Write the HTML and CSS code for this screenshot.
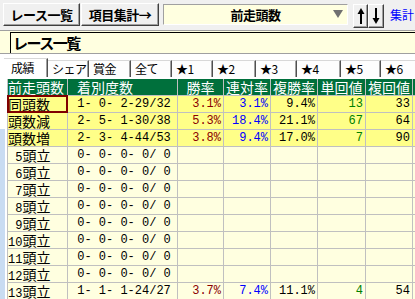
FILE: index.html
```html
<!DOCTYPE html>
<html lang="ja">
<head>
<meta charset="utf-8">
<title>レース一覧</title>
<link rel="stylesheet" href="styles.css">
</head>
<body>
<div class="app">
  <div class="toolbar">
    <button class="btn btn-list">レース一覧</button>
    <button class="btn btn-item">項目集計→</button>
    <div class="select">
      <span class="select-text">前走頭数</span>
      <span class="caret"></span>
    </div>
    <button class="btn btn-arrow btn-up" aria-label="上へ">
      <svg width="8" height="16" viewBox="0 0 8 16"><polygon points="4,0 7.5,6 0.5,6" fill="#000"/><rect x="3" y="5" width="2" height="11" fill="#000"/></svg>
    </button>
    <button class="btn btn-arrow btn-down" aria-label="下へ">
      <svg width="8" height="16" viewBox="0 0 8 16"><polygon points="4,16 7.5,10 0.5,10" fill="#000"/><rect x="3" y="0" width="2" height="11" fill="#000"/></svg>
    </button>
    <span class="link">集計</span>
  </div>

  <div class="titlebar"><div class="titlebox">レース一覧</div></div>

  <div class="tabs">
    <div class="tab active t-w44">成績</div>
    <div class="tab t-w41">シェア</div>
    <div class="tab t-w42">賞金</div>
    <div class="tab t-w41">全て</div>
    <div class="tab t-w41">★1</div>
    <div class="tab t-w43">★2</div>
    <div class="tab t-w41">★3</div>
    <div class="tab t-w44">★4</div>
    <div class="tab t-w40">★5</div>
    <div class="tab t-w42">★6</div>
  </div>

  <div class="tablewrap">
    <div class="strip"></div>
    <div class="grid">
      <div class="th th-left">前走頭数</div>
      <div class="th th-left2">着別度数</div>
      <div class="th">勝率</div>
      <div class="th">連対率</div>
      <div class="th">複勝率</div>
      <div class="th">単回値</div>
      <div class="th">複回値</div>
      <div class="th"></div>

      <div class="td lbl hl sel">同頭数</div>
      <div class="td cnt hl"> 1- 0- 2-29/32</div>
      <div class="td num hl red">3.1%</div>
      <div class="td num hl blue">3.1%</div>
      <div class="td num hl">9.4%</div>
      <div class="td num hl green">13</div>
      <div class="td num hl">33</div>
      <div class="td hl"></div>

      <div class="td lbl hl">頭数減</div>
      <div class="td cnt hl"> 2- 5- 1-30/38</div>
      <div class="td num hl red">5.3%</div>
      <div class="td num hl blue">18.4%</div>
      <div class="td num hl">21.1%</div>
      <div class="td num hl green">67</div>
      <div class="td num hl">64</div>
      <div class="td hl"></div>

      <div class="td lbl hl">頭数増</div>
      <div class="td cnt hl"> 2- 3- 4-44/53</div>
      <div class="td num hl red">3.8%</div>
      <div class="td num hl blue">9.4%</div>
      <div class="td num hl">17.0%</div>
      <div class="td num hl green">7</div>
      <div class="td num hl">90</div>
      <div class="td hl"></div>

      <div class="td lbl"><span class="d"> 5</span>頭立</div>
      <div class="td cnt"> 0- 0- 0- 0/ 0</div>
      <div class="td"></div><div class="td"></div><div class="td"></div><div class="td"></div><div class="td"></div><div class="td"></div>

      <div class="td lbl"><span class="d"> 6</span>頭立</div>
      <div class="td cnt"> 0- 0- 0- 0/ 0</div>
      <div class="td"></div><div class="td"></div><div class="td"></div><div class="td"></div><div class="td"></div><div class="td"></div>

      <div class="td lbl"><span class="d"> 7</span>頭立</div>
      <div class="td cnt"> 0- 0- 0- 0/ 0</div>
      <div class="td"></div><div class="td"></div><div class="td"></div><div class="td"></div><div class="td"></div><div class="td"></div>

      <div class="td lbl"><span class="d"> 8</span>頭立</div>
      <div class="td cnt"> 0- 0- 0- 0/ 0</div>
      <div class="td"></div><div class="td"></div><div class="td"></div><div class="td"></div><div class="td"></div><div class="td"></div>

      <div class="td lbl"><span class="d"> 9</span>頭立</div>
      <div class="td cnt"> 0- 0- 0- 0/ 0</div>
      <div class="td"></div><div class="td"></div><div class="td"></div><div class="td"></div><div class="td"></div><div class="td"></div>

      <div class="td lbl"><span class="d">10</span>頭立</div>
      <div class="td cnt"> 0- 0- 0- 0/ 0</div>
      <div class="td"></div><div class="td"></div><div class="td"></div><div class="td"></div><div class="td"></div><div class="td"></div>

      <div class="td lbl"><span class="d">11</span>頭立</div>
      <div class="td cnt"> 0- 0- 0- 0/ 0</div>
      <div class="td"></div><div class="td"></div><div class="td"></div><div class="td"></div><div class="td"></div><div class="td"></div>

      <div class="td lbl"><span class="d">12</span>頭立</div>
      <div class="td cnt"> 0- 0- 0- 0/ 0</div>
      <div class="td"></div><div class="td"></div><div class="td"></div><div class="td"></div><div class="td"></div><div class="td"></div>

      <div class="td lbl"><span class="d">13</span>頭立</div>
      <div class="td cnt"> 1- 1- 1-24/27</div>
      <div class="td num red">3.7%</div>
      <div class="td num blue">7.4%</div>
      <div class="td num">11.1%</div>
      <div class="td num green">4</div>
      <div class="td num">54</div>
      <div class="td"></div>
    </div>
  </div>
</div>
</body>
</html>
```

FILE: styles.css
```css
* {
  box-sizing: border-box;
  margin: 0;
  padding: 0;
}

html, body {
  width: 415px;
  height: 299px;
  overflow: hidden;
}

body {
  background: #f0f0f0;
  font-family: "Noto Sans CJK JP", sans-serif;
  color: #000;
}

.app {
  width: 415px;
  height: 299px;
  overflow: hidden;
}

/* ---------- toolbar ---------- */
.toolbar {
  display: flex;
  align-items: flex-start;
  height: 30px;
  padding: 3px 0 0 3px;
}

.btn {
  font-family: "Noto Sans CJK JP", sans-serif;
  font-weight: bold;
  font-size: 13px;
  line-height: 1;
  color: #000;
  background: #f0f0f0;
  border: 1px solid;
  border-color: #ffffff #404040 #404040 #ffffff;
  box-shadow: inset -1px -1px 0 #a0a0a0;
  height: 23px;
  display: flex;
  align-items: center;
  justify-content: center;
  padding: 0;
  letter-spacing: -0.5px;
}

.btn-list {
  width: 77px;
}

.btn-item {
  width: 78px;
  margin-left: 1px;
}

.select {
  position: relative;
  width: 185px;
  height: 21px;
  margin-left: 4px;
  margin-top: 1px;
  background: #ffffe0;
  border: 1px solid;
  border-color: #a0a0a0 #ffffff #ffffff #a0a0a0;
  display: flex;
  align-items: center;
  justify-content: center;
}

.select-text {
  font-weight: bold;
  font-size: 13px;
  line-height: 1;
  letter-spacing: -0.5px;
}

.caret {
  position: absolute;
  right: 4px;
  top: 5px;
  width: 0;
  height: 0;
  border-left: 5px solid transparent;
  border-right: 5px solid transparent;
  border-top: 8px solid #707070;
}

.btn-arrow {
  width: 15px;
  height: 24px;
  margin-top: 1px;
}

.btn-up {
  margin-left: 5px;
}

.btn-down {
  width: 16px;
}

.link {
  flex: none;
  margin-left: 6px;
  margin-top: 5px;
  font-size: 12px;
  line-height: 14px;
  color: #0000ff;
  white-space: nowrap;
}

/* ---------- title bar ---------- */
.titlebar {
  height: 24px;
  background: #ffffe0;
  border-top: 1px solid #a0a0a0;
  border-bottom: 1px solid #a0a0a0;
  padding-left: 10px;
  padding-top: 1px;
}

.titlebox {
  height: 21px;
  border-left: 1px solid #000;
  border-top: 1px solid #000;
  padding-left: 2px;
  font-weight: bold;
  font-size: 15px;
  line-height: 19px;
  letter-spacing: -1.5px;
}

/* ---------- tabs ---------- */
.tabs {
  display: flex;
  align-items: flex-end;
  height: 23px;
  padding: 0 0 0 4px;
  background: #ffffff;
}

.tab {
  flex: none;
  height: 17px;
  padding-left: 4px;
  font-size: 12px;
  line-height: 16px;
  letter-spacing: -0.5px;
  background: #fdfdfd;
  border-top: 1px solid #d8d8d8;
  border-right: 1px solid #505050;
  box-shadow: inset -1px 0 0 #a0a0a0;
  white-space: nowrap;
  overflow: hidden;
}

.tab.active {
  height: 19px;
  padding-left: 7px;
  background: #ffffff;
  line-height: 18px;
}

.t-w40 { width: 40px; }
.t-w41 { width: 41px; }
.t-w42 { width: 42px; }
.t-w43 { width: 43px; }
.t-w44 { width: 44px; }

/* ---------- table ---------- */
.tablewrap {
  position: relative;
  height: 222px;
  padding-top: 2px;
  background: #ffffff;
  overflow: hidden;
}

.strip {
  position: absolute;
  left: 0;
  top: 52px;
  bottom: 0;
  width: 5px;
  background: #c9dcf2;
}

.grid {
  display: grid;
  grid-template-columns: 59px 109px 45px 46px 46px 47px 46px 60px;
  grid-auto-rows: 16px;
  gap: 1px;
  background: #c0c0c0;
  margin-left: 7px;
  padding-left: 1px;
  width: max-content;
}

.th {
  background: #00703c;
  color: #ffffff;
  font-size: 14px;
  line-height: 16px;
  text-align: center;
  white-space: nowrap;
}

.th-left {
  text-align: left;
}

.th-left2 {
  text-align: left;
  padding-left: 9px;
}

.td {
  background: #ffffe0;
  font-size: 14px;
  line-height: 16px;
  white-space: pre;
  overflow: hidden;
}

.td.hl {
  background: #ffff88;
}

.lbl {
  overflow: visible;
}

.d {
  font-family: "Liberation Mono", monospace;
  font-size: 12px;
  white-space: pre;
}

.cnt {
  font-family: "Liberation Mono", monospace;
  font-size: 12px;
  padding-left: 2px;
}

.num {
  font-family: "Liberation Mono", monospace;
  font-size: 12px;
  text-align: right;
  padding-right: 2px;
}

.red { color: #8b0000; }
.blue { color: #0000ff; }
.green { color: #008000; }

.sel {
  position: relative;
}

.sel::after {
  content: "";
  position: absolute;
  left: -1px;
  top: -1px;
  right: -1px;
  bottom: -1px;
  border: 2px solid #800000;
}
```
